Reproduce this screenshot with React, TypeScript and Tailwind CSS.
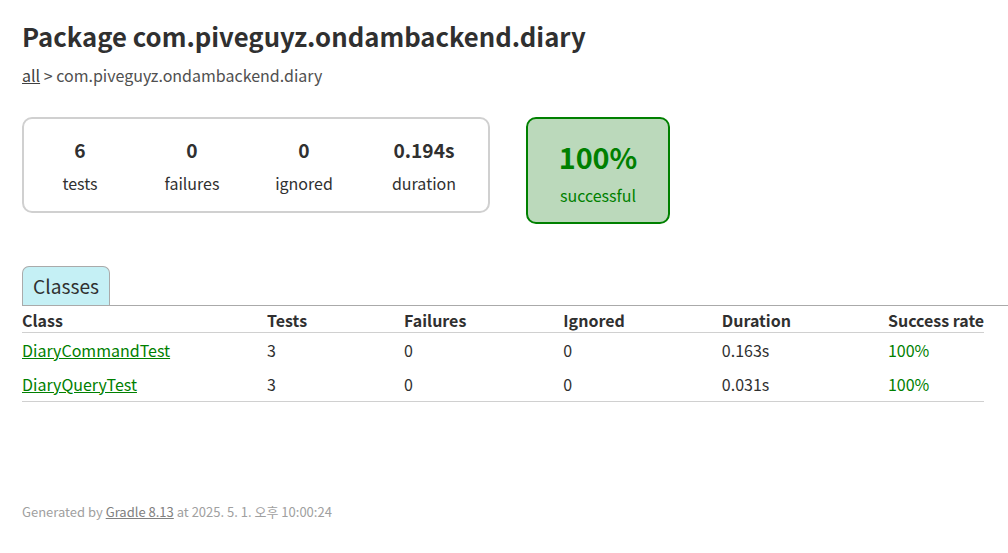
const stats = [
  { value: "6", label: "tests", w: "w-[112px]" },
  { value: "0", label: "failures", w: "w-[112px]" },
  { value: "0", label: "ignored", w: "w-[112px]" },
  { value: "0.194s", label: "duration", w: "w-[128px]" },
];

const rows = [
  { name: "DiaryCommandTest", tests: "3", failures: "0", ignored: "0", duration: "0.163s", rate: "100%" },
  { name: "DiaryQueryTest", tests: "3", failures: "0", ignored: "0", duration: "0.031s", rate: "100%" },
];

export default function App() {
  return (
    <div className="min-h-[553px] bg-white pl-[22px] pt-[17px] font-['Noto_Sans_CJK_KR','Noto_Sans',sans-serif] text-[16px] text-[#303030]">
      <h1 className="whitespace-nowrap text-[25.7px] font-bold leading-[37px]">
        Package com.piveguyz.ondambackend.diary
      </h1>
      <div className="mt-[10px] leading-[23px] text-[#505050]">
        <a href="#" className="text-[#404040] underline">
          all
        </a>{" "}
        &gt; com.piveguyz.ondambackend.diary
      </div>

      {/* Summary */}
      <div className="mt-[30px] flex items-start">
        <div className="flex rounded-[10px] border-2 border-[#d0d0d0]">
          {stats.map((s) => (
            <div key={s.label} className={`${s.w} pb-[16px] pt-[17px] text-center`}>
              <div className="mb-[8px] text-[19.2px] font-bold leading-[28px]">{s.value}</div>
              <div className="leading-[23px]">{s.label}</div>
            </div>
          ))}
        </div>
        <div className="ml-[36px] w-[144px] rounded-[10px] border-2 border-[#008000] bg-[#bbd9bb] pb-[15px] pt-[17px] text-center text-[#008000]">
          <div className="mb-[6px] text-[28.8px] font-bold leading-[42px]">100%</div>
          <div className="leading-[23px]">successful</div>
        </div>
      </div>

      {/* Tabs */}
      <ul className="mt-[42px] flex border-b border-[#aaaaaa]">
        <li className="rounded-t-[7px] border border-b-0 border-[#aaaaaa] bg-[#c5f0f5] px-[10px] py-[5px]">
          <a href="#" className="block text-[19.2px] leading-[28px] text-[#303030] no-underline">
            Classes
          </a>
        </li>
      </ul>

      <table className="mt-[2px] border-collapse border-b border-[#d0d0d0]">
        <thead>
          <tr>
            {["Class", "Tests", "Failures", "Ignored", "Duration", "Success rate"].map((h, i) => (
              <th
                key={h}
                className={`whitespace-nowrap border-b border-[#d0d0d0] text-left font-bold leading-[24px] ${
                  i === 0 ? "pl-0" : "pl-[97px]"
                }`}
              >
                {h}
              </th>
            ))}
          </tr>
        </thead>
        <tbody>
          {rows.map((r) => (
            <tr key={r.name} className="leading-[24px]">
              <td className="whitespace-nowrap py-[5px] pl-0">
                <a href="#" className="text-[#008000] underline">
                  {r.name}
                </a>
              </td>
              <td className="whitespace-nowrap py-[5px] pl-[97px]">{r.tests}</td>
              <td className="whitespace-nowrap py-[5px] pl-[97px]">{r.failures}</td>
              <td className="whitespace-nowrap py-[5px] pl-[97px]">{r.ignored}</td>
              <td className="whitespace-nowrap py-[5px] pl-[97px]">{r.duration}</td>
              <td className="whitespace-nowrap py-[5px] pl-[97px] text-[#008000]">{r.rate}</td>
            </tr>
          ))}
        </tbody>
      </table>

      {/* Footer */}
      <div className="mt-[100px] whitespace-nowrap text-[13px] leading-[19px] text-[#a0a0a0]">
        Generated by{" "}
        <a href="#" className="text-[#808080] underline">
          Gradle 8.13
        </a>{" "}
        at 2025. 5. 1. 오후 10:00:24
      </div>
    </div>
  );
}
